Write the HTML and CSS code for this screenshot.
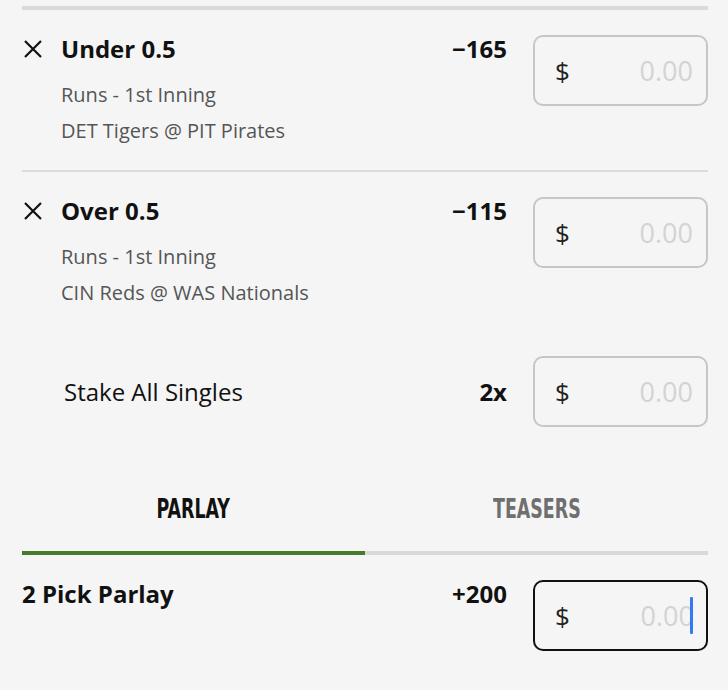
FILE: index.html
```html
<!DOCTYPE html>
<html>
<head>
<meta charset="utf-8">
<link rel="stylesheet" href="styles.css">
</head>
<body>
<div class="slip">
  <div class="topline"></div>

  <div class="bet sep">
    <div class="remove">
      <svg width="20" height="20" viewBox="0 0 20 20"><path d="M2 2 L18 18 M18 2 L2 18" stroke="#111" stroke-width="2.2" fill="none"/></svg>
    </div>
    <div class="info">
      <div class="title">Under 0.5</div>
      <div class="subs">
        <div class="sub">Runs - 1st Inning</div>
        <div class="sub">DET Tigers @ PIT Pirates</div>
      </div>
    </div>
    <div class="odds">−165</div>
    <div class="stake"><span class="cur">$</span><span class="amt">0.00</span></div>
  </div>

  <div class="bet">
    <div class="remove">
      <svg width="20" height="20" viewBox="0 0 20 20"><path d="M2 2 L18 18 M18 2 L2 18" stroke="#111" stroke-width="2.2" fill="none"/></svg>
    </div>
    <div class="info">
      <div class="title">Over 0.5</div>
      <div class="subs">
        <div class="sub">Runs - 1st Inning</div>
        <div class="sub">CIN Reds @ WAS Nationals</div>
      </div>
    </div>
    <div class="odds">−115</div>
    <div class="stake"><span class="cur">$</span><span class="amt">0.00</span></div>
  </div>

  <div class="all">
    <div class="all-label">Stake All Singles</div>
    <div class="odds">2x</div>
    <div class="stake"><span class="cur">$</span><span class="amt">0.00</span></div>
  </div>

  <div class="tabs">
    <div class="tab active"><span>PARLAY</span></div>
    <div class="tab"><span>TEASERS</span></div>
  </div>

  <div class="parlay">
    <div class="info">
      <div class="title">2 Pick Parlay</div>
    </div>
    <div class="odds">+200</div>
    <div class="stake focus"><span class="cur">$</span><span class="amt">0.00</span><span class="caret"></span></div>
  </div>
</div>
</body>
</html>
```

FILE: styles.css
```css
html, body {
  margin: 0;
  padding: 0;
  background: #f5f5f5;
}
body {
  font-family: "Open Sans", "DejaVu Sans", sans-serif;
  color: #111;
  width: 728px;
  height: 690px;
  overflow: hidden;
}
.slip {
  padding: 0 20px 0 22px;
}
.topline {
  margin-top: 6px;
  height: 4px;
  background: #dadada;
}
.bet {
  display: flex;
  align-items: flex-start;
  padding: 25px 0 21px;
}
.bet.sep {
  border-bottom: 2px solid #dcdcdc;
}
.remove {
  width: 39px;
  flex: none;
  height: 28px;
  display: flex;
  align-items: center;
}
.remove svg {
  display: block;
  margin-left: 1px;
}
.info {
  flex: 1;
}
.title {
  font-size: 24px;
  font-weight: 700;
  line-height: 28px;
}
.subs {
  margin-top: 14px;
}
.sub {
  font-size: 20px;
  line-height: 36px;
  color: #555;
}
.odds {
  font-size: 24px;
  font-weight: 700;
  line-height: 28px;
  margin-right: 26px;
}
.stake {
  flex: none;
  box-sizing: border-box;
  width: 175px;
  height: 71px;
  border: 2px solid #c6c6c6;
  border-radius: 10px;
  display: flex;
  align-items: center;
  padding: 0 13px 0 20px;
}
.cur {
  font-size: 26px;
  color: #222;
  flex: 1;
}
.amt {
  font-size: 27px;
  color: #d3d3d3;
}
.all {
  display: flex;
  align-items: center;
  margin-top: 24px;
}
.all-label {
  flex: 1;
  padding-left: 42px;
  font-size: 24px;
}
.tabs {
  display: flex;
  padding-top: 67px;
}
.tab {
  flex: 1;
  text-align: center;
  padding-bottom: 27px;
  border-bottom: 4px solid #d9d9d9;
  font-family: "Liberation Sans Narrow", "DejaVu Sans Condensed", "Liberation Sans", sans-serif;
  font-weight: 700;
  font-size: 26px;
  line-height: 30px;
  color: #6f6f6f;
}
.tab span {
  display: inline-block;
  transform: scaleX(0.745);
}
.tab.active {
  color: #111;
  border-bottom-color: #477a2b;
}
.parlay {
  display: flex;
  align-items: flex-start;
  padding-top: 25px;
}
.stake.focus {
  border-color: #111;
  padding-right: 12px;
  position: relative;
}
.caret {
  position: absolute;
  right: 13px;
  top: 15px;
  width: 3px;
  height: 37px;
  background: #3478f6;
  border-radius: 1px;
}
```
